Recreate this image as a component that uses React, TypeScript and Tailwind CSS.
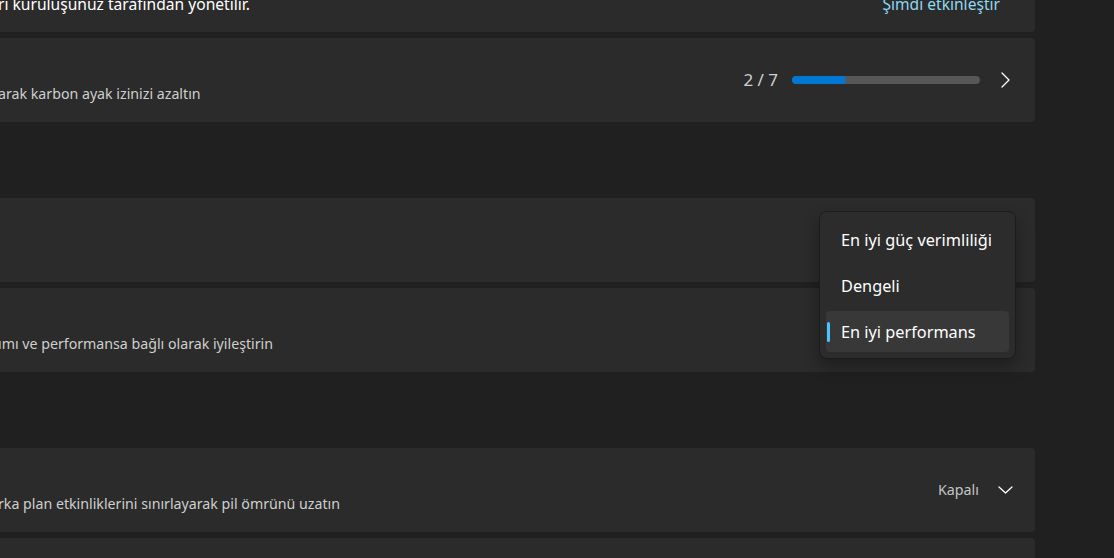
import type { ReactNode } from 'react'

function Card({ children, className = '' }: { children?: ReactNode; className?: string }) {
  return <div className={`flex rounded-[4px] bg-[#2b2b2b] pl-[6px] pr-[22px] ${className}`}>{children}</div>
}

function ChevronRight() {
  return (
    <svg width="9" height="16" viewBox="0 0 9 16" fill="none">
      <path d="M1 1 L8 8 L1 15" stroke="#ffffff" strokeWidth="1.3" strokeLinecap="round" strokeLinejoin="round" />
    </svg>
  )
}

function ChevronDown() {
  return (
    <svg width="15" height="8" viewBox="0 0 15 8" fill="none">
      <path d="M1 1 L7.5 7 L14 1" stroke="#ffffff" strokeWidth="1.3" strokeLinecap="round" strokeLinejoin="round" />
    </svg>
  )
}

const modes = ['En iyi güç verimliliği', 'Dengeli', 'En iyi performans']

export default function App() {
  const selected = 2

  return (
    <div className="relative h-[558px] w-[1114px] overflow-hidden bg-[#202020] font-['Noto_Sans','Open_Sans',sans-serif] text-white">
      <div className="-ml-[8px] flex w-[1043px] flex-col gap-[6px]">
        <Card className="-mt-[32px] h-[64px] items-center justify-between pt-[8px]">
          <span className="text-[15.6px] leading-[20px]">rı kuruluşunuz tarafından yönetilir.</span>
          <span className="mr-[13px] text-[15.6px] leading-[20px] text-[#8fd8f2]">Şimdi etkinleştir</span>
        </Card>

        <Card className="h-[84px] justify-between">
          <div className="pt-[47px] text-[14.2px] leading-[18px] text-[#cfcfcf]">arak karbon ayak izinizi azaltın</div>
          <div className="flex items-center pr-[3px]">
            <span className="text-[17px] leading-[22px] text-[#d0d0d0]">2 / 7</span>
            <div className="ml-[14px] h-[8px] w-[188px] overflow-hidden rounded-full bg-[#575757]">
              <div className="h-full rounded-full bg-[#0078d4]" style={{ width: `${(2 / 7) * 100}%` }} />
            </div>
            <span className="ml-[21px] flex">
              <ChevronRight />
            </span>
          </div>
        </Card>

        <div className="h-[64px]" />

        <Card className="h-[84px]" />

        <Card className="h-[84px] justify-between">
          <div className="pt-[47px] text-[14.2px] leading-[18px] text-[#cfcfcf]">ımı ve performansa bağlı olarak iyileştirin</div>
        </Card>

        <div className="h-[64px]" />

        <Card className="h-[84px] justify-between">
          <div className="pt-[47px] text-[14.2px] leading-[18px] text-[#cfcfcf]">rka plan etkinliklerini sınırlayarak pil ömrünü uzatın</div>
          <div className="flex items-center">
            <span className="text-[14.3px] leading-[20px] text-[#c5c5c5]">Kapalı</span>
            <span className="ml-[19px] flex">
              <ChevronDown />
            </span>
          </div>
        </Card>

        <Card className="h-[84px]" />
      </div>

      <div className="absolute left-[819px] top-[211px] flex w-[197px] flex-col gap-[5px] rounded-[8px] border border-[#1c1c1c] bg-[#2c2c2c] px-[6px] pb-[6px] pt-[7px] shadow-[0_8px_16px_rgba(0,0,0,0.3)]">
        {modes.map((m, i) => (
          <div
            key={m}
            className={`relative flex h-[41px] items-center rounded-[4px] pl-[15px] text-[16.3px] leading-[20px] ${i === selected ? 'bg-[#383838]' : ''}`}
          >
            {i === selected && <span className="absolute left-[1px] top-[11px] h-[20px] w-[3px] rounded-full bg-[#4cc2ff]" />}
            {m}
          </div>
        ))}
      </div>
    </div>
  )
}
